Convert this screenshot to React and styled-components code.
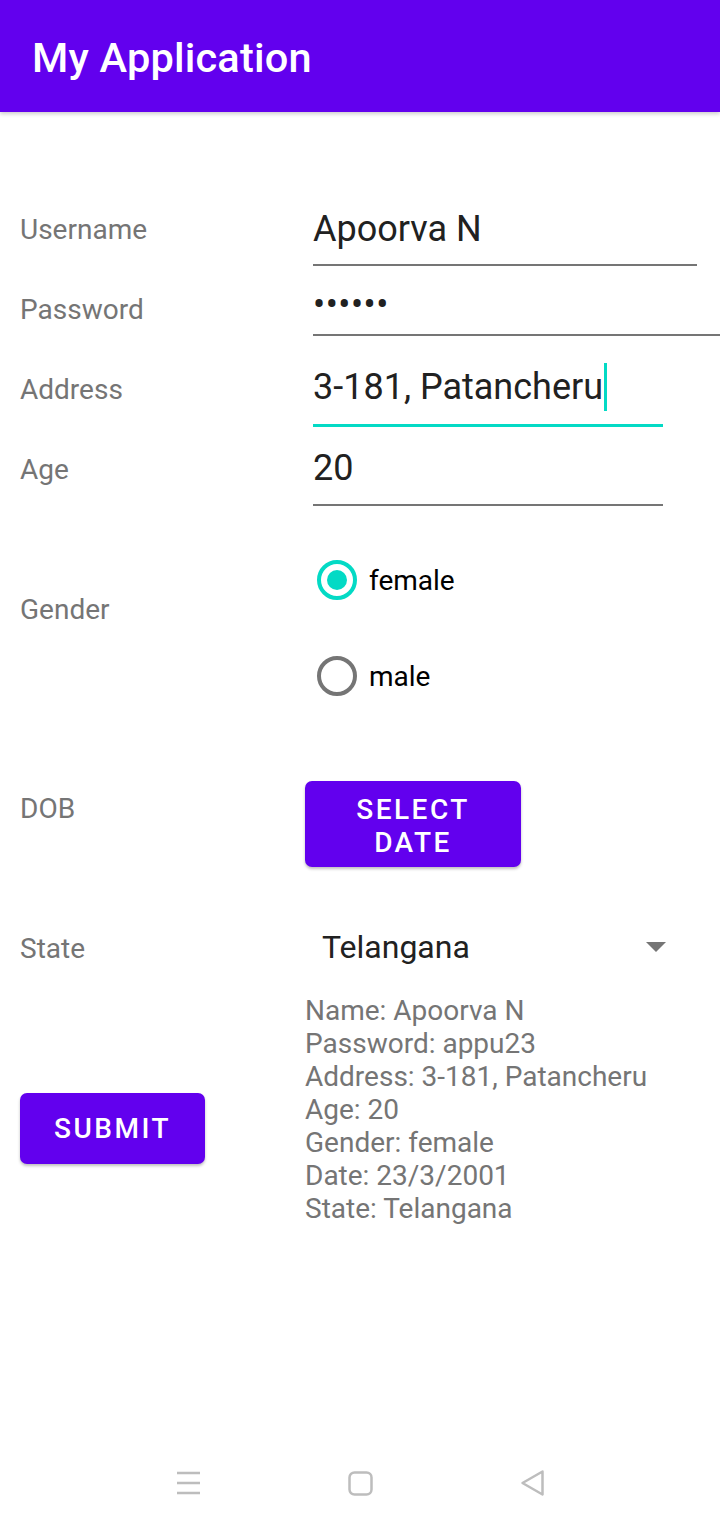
import React from 'react'
import styled, { createGlobalStyle } from 'styled-components'

const GlobalStyle = createGlobalStyle`
    * {
        box-sizing: border-box;
    }
    body {
        margin: 0;
        background: #ffffff;
        font-family: Roboto, 'Noto Sans', sans-serif;
    }
`;

export default function App() {
    const fields = [
        { id: 1, label: 'Username', value: 'Apoorva N', width: 384, mt: 17, pb: 13 },
        { id: 2, label: 'Password', value: '••••••', width: 407, mt: 11, pb: 9, secret: true },
        { id: 3, label: 'Address', value: '3-181, Patancheru', width: 350, mt: 15, pb: 15, focused: true },
        { id: 4, label: 'Age', value: '20', width: 350, mt: 16, pb: 14 }
    ];

    const summary = [
        'Name: Apoorva N',
        'Password: appu23',
        'Address: 3-181, Patancheru',
        'Age: 20',
        'Gender: female',
        'Date: 23/3/2001',
        'State: Telangana'
    ];

  return (
    <Page>
        <GlobalStyle />
        <AppBar>
            <AppTitle>My Application</AppTitle>
        </AppBar>
        <Form>
            {fields.map((field) => (
                <Row key={field.id}>
                    <Label>{field.label}</Label>
                    <Field $width={field.width} $mt={field.mt} $pb={field.pb} $focused={field.focused}>
                        <Value $secret={field.secret}>
                            {field.value}
                            {field.focused && <Cursor />}
                        </Value>
                    </Field>
                </Row>
            ))}
            <Row>
                <Label $mt={60}>Gender</Label>
                <RadioGroup>
                    <RadioRow>
                        <RadioCircle $checked />
                        <RadioText>female</RadioText>
                    </RadioRow>
                    <RadioRow>
                        <RadioCircle />
                        <RadioText>male</RadioText>
                    </RadioRow>
                </RadioGroup>
            </Row>
            <Row>
                <Label $mt={45}>DOB</Label>
                <DateButton>SELECT<br />DATE</DateButton>
            </Row>
            <Row>
                <Label $mt={42}>State</Label>
                <Spinner>
                    <SpinnerText>Telangana</SpinnerText>
                    <Arrow />
                </Spinner>
            </Row>
            <Row>
                <LeftCell>
                    <SubmitButton>SUBMIT</SubmitButton>
                </LeftCell>
                <Summary>
                    {summary.map((line) => (
                        <div key={line}>{line}</div>
                    ))}
                </Summary>
            </Row>
        </Form>
        <NavBar>
            <svg width="25" height="24" viewBox="0 0 25 24">
                <path d="M1 2h23M1 12h23M1 22h23" stroke="#bdbdbd" strokeWidth="2.5" fill="none" />
            </svg>
            <svg width="25" height="25" viewBox="0 0 25 25">
                <rect x="1.5" y="1.5" width="22" height="22" rx="5" stroke="#bdbdbd" strokeWidth="2.5" fill="none" />
            </svg>
            <svg width="25" height="28" viewBox="0 0 25 28">
                <path d="M22.5 2.5 L2.5 14 L22.5 25.5 Z" stroke="#bdbdbd" strokeWidth="2.5" strokeLinejoin="round" fill="none" />
            </svg>
        </NavBar>
    </Page>
  )
}

const Page = styled.div`
    display: flex;
    flex-direction: column;
    min-height: 100vh;
`;

const AppBar = styled.header`
    display: flex;
    align-items: center;
    height: 112px;
    padding-left: 32px;
    padding-top: 3px;
    background-color: #6200EE;
    box-shadow: 0 2px 4px rgba(0, 0, 0, 0.2);
`;

const AppTitle = styled.h1`
    margin: 0;
    color: #ffffff;
    font-family: Roboto, sans-serif;
    font-weight: 500;
    font-size: 41.5px;
    letter-spacing: 0.2px;
`;

const Form = styled.main`
    display: flex;
    flex-direction: column;
    padding-top: 78px;
`;

const Row = styled.div`
    display: flex;
    align-items: flex-start;
    padding-left: 20px;
`;

const Label = styled.div`
    flex: 0 0 285px;
    margin-top: ${(p) => p.$mt || 0}px;
    line-height: 80px;
    color: #757575;
    font-size: 28px;
`;

const LeftCell = styled.div`
    flex: 0 0 285px;
`;

const Field = styled.div`
    width: ${(p) => p.$width}px;
    margin-left: 8px;
    margin-top: ${(p) => p.$mt}px;
    padding-bottom: ${(p) => p.$pb}px;
    margin-bottom: ${(p) => 80 - p.$mt - 44 - p.$pb - (p.$focused ? 3 : 2)}px;
    border-bottom: ${(p) => (p.$focused ? '3px solid #03DAC5' : '2px solid #757575')};
`;

const Value = styled.div`
    display: flex;
    align-items: center;
    height: 44px;
    color: #212121;
    font-size: 36px;
    ${(p) => p.$secret && 'padding-top: 4px; letter-spacing: 0.5px;'}
`;

const Cursor = styled.span`
    display: inline-block;
    width: 3px;
    height: 48px;
    margin-left: 1px;
    background-color: #03DAC5;
`;

const RadioGroup = styled.div`
    display: flex;
    flex-direction: column;
    margin-top: 22px;
`;

const RadioRow = styled.div`
    display: flex;
    align-items: center;
    gap: 12px;
    height: 96px;
    padding-left: 12px;
`;

const RadioCircle = styled.span`
    display: flex;
    align-items: center;
    justify-content: center;
    width: 40px;
    height: 40px;
    border-radius: 50%;
    border: 4px solid ${(p) => (p.$checked ? '#03DAC5' : '#757575')};

    &::after {
        content: '';
        display: ${(p) => (p.$checked ? 'block' : 'none')};
        width: 20px;
        height: 20px;
        border-radius: 50%;
        background-color: #03DAC5;
    }
`;

const RadioText = styled.span`
    color: #000000;
    font-size: 28px;
`;

const Button = styled.button`
    border: none;
    border-radius: 7px;
    background-color: #6200EE;
    color: #ffffff;
    font-family: Roboto, sans-serif;
    font-weight: 500;
    font-size: 28px;
    letter-spacing: 2.5px;
    line-height: 33px;
    box-shadow: 0 2px 3px rgba(0, 0, 0, 0.25);
    cursor: pointer;
`;

const DateButton = styled(Button)`
    width: 216px;
    height: 86px;
    margin-top: 57px;
    padding-top: 4px;
`;

const SubmitButton = styled(Button)`
    width: 185px;
    height: 71px;
    margin-top: 104px;
`;

const Spinner = styled.div`
    display: flex;
    align-items: center;
    justify-content: space-between;
    width: 361px;
    height: 80px;
    margin-top: 40px;
    padding-left: 17px;
`;

const SpinnerText = styled.span`
    color: #212121;
    font-size: 32px;
`;

const Arrow = styled.span`
    width: 0;
    height: 0;
    border-left: 10px solid transparent;
    border-right: 10px solid transparent;
    border-top: 10px solid #757575;
`;

const Summary = styled.div`
    display: flex;
    flex-direction: column;
    margin-top: 5px;
    color: #757575;
    font-size: 28px;
    line-height: 33px;
`;

const NavBar = styled.nav`
    display: flex;
    justify-content: center;
    align-items: center;
    gap: 147px;
    height: 88px;
    margin-top: auto;
`;
